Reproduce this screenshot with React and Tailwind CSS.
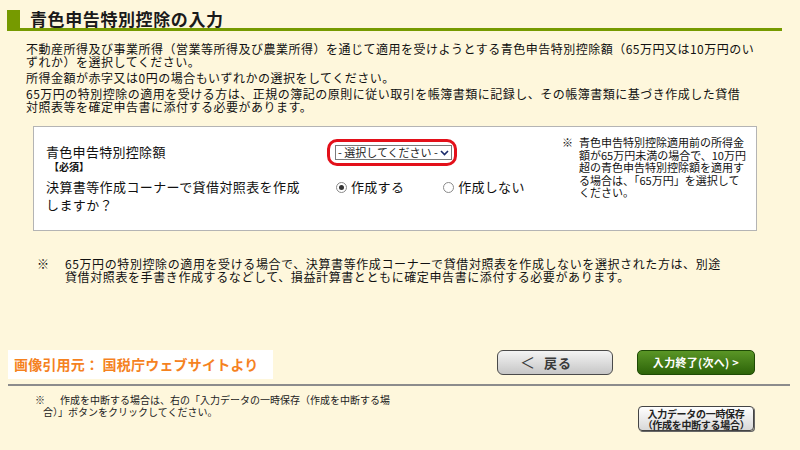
const font = {
  fontFamily: '"Noto Sans CJK JP", "Liberation Sans", sans-serif',
};

const Radio = ({ checked, label }) => (
  <div className="flex items-center">
    <span className="w-[11px] h-[11px] rounded-full border border-[#8a8a8a] bg-white flex items-center justify-center">
      {checked && <span className="w-[5px] h-[5px] rounded-full bg-[#333]"></span>}
    </span>
    <span className="ml-[4px] text-[13px] tracking-[0.3px]">{label}</span>
  </div>
);

const App = () => {
  return (
    <div
      className="w-[800px] h-[450px] bg-[#fef7dc] text-[#111] overflow-hidden flex flex-col"
      style={font}
    >
      {/* heading */}
      <div className="ml-[7px] w-[775px] mt-[10px] flex items-end border-b-[3px] border-[#769a00]">
        <div className="w-[13px] h-[18px] bg-[#769a00]"></div>
        <div className="ml-[10px] h-[18px] flex items-center text-[17px] font-bold tracking-[0.6px] text-[#1a1a1a]">
          青色申告特別控除の入力
        </div>
      </div>

      {/* intro */}
      <div className="ml-[26px] mt-[11px] text-[12px] leading-[13px] tracking-[0.5px] whitespace-nowrap">
        <p>
          不動産所得及び事業所得（営業等所得及び農業所得）を通じて適用を受けようとする青色申告特別控除額（65万円又は10万円のい
          <br />
          ずれか）を選択してください。
        </p>
        <p className="mt-[3px]">所得金額が赤字又は0円の場合もいずれかの選択をしてください。</p>
        <p className="mt-[3px]">
          65万円の特別控除の適用を受ける方は、正規の簿記の原則に従い取引を帳簿書類に記録し、その帳簿書類に基づき作成した貸借
          <br />
          対照表等を確定申告書に添付する必要があります。
        </p>
      </div>

      {/* form box */}
      <div className="ml-[33px] mt-[13px] w-[724px] h-[105px] bg-white border border-[#b4b4b4] flex">
        <div className="w-[528px] pl-[12px] pt-[12px]">
          <div className="flex items-start">
            <div className="w-[281px]">
              <div className="mt-[4px] text-[13px] leading-[18px] tracking-[0.3px]">青色申告特別控除額</div>
              <div className="ml-[3px] text-[10px] leading-[12px] font-bold">【必須】</div>
            </div>
            <div className="border-[3px] border-[#e3101a] rounded-[10px] pl-[5px] pr-[2px] py-[3px]">
              <div className="w-[117px] h-[15px] border border-[#7a7a7a] bg-white flex items-center justify-between px-[2px]">
                <span className="text-[11px] leading-[13px] text-[#222]">- 選択してください -</span>
                <svg width="9" height="6" viewBox="0 0 9 6">
                  <path d="M1 1 L4.5 4.5 L8 1" fill="none" stroke="#1a2a6a" strokeWidth="1.6" />
                </svg>
              </div>
            </div>
          </div>
          <div className="flex items-start mt-[5px]">
            <div className="w-[290px] text-[13px] leading-[18px] tracking-[0.4px]">
              決算書等作成コーナーで貸借対照表を作成
              <br />
              しますか？
            </div>
            <div className="flex h-[18px] items-center">
              <Radio checked label="作成する" />
              <div className="ml-[39px]">
                <Radio label="作成しない" />
              </div>
            </div>
          </div>
        </div>
        <div className="pt-[9px] flex text-[11px] leading-[12.5px] whitespace-nowrap">
          <span className="w-[17px]">※</span>
          <span>
            青色申告特別控除適用前の所得金
            <br />
            額が65万円未満の場合で、10万円
            <br />
            超の青色申告特別控除額を適用す
            <br />
            る場合は、「65万円」を選択して
            <br />
            ください。
          </span>
        </div>
      </div>

      {/* note */}
      <div className="ml-[37px] mt-[26px] flex text-[12px] leading-[13px] tracking-[0.6px] whitespace-nowrap">
        <span className="w-[28px]">※</span>
        <span>
          65万円の特別控除の適用を受ける場合で、決算書等作成コーナーで貸借対照表を作成しないを選択された方は、別途
          <br />
          貸借対照表を手書き作成するなどして、損益計算書とともに確定申告書に添付する必要があります。
        </span>
      </div>

      {/* footer buttons */}
      <div className="mt-[67px] flex items-start">
        <div className="ml-[8px] w-[265px] h-[29px] bg-white flex items-center pl-[6px] text-[14px] font-bold text-[#f5821f] tracking-[0.2px]">
          画像引用元： 国税庁ウェブサイトより
        </div>
        <button className="ml-[224px] w-[116px] h-[25px] rounded-[6px] border-[1.5px] border-[#4a4a4a] bg-gradient-to-b from-[#f4f4f4] to-[#c6c6c6] flex items-center text-[13px] font-bold text-[#3a3a3a]">
          <span className="ml-[22px] text-[15px] font-normal">＜</span>
          <span className="ml-[9px] tracking-[1px]">戻る</span>
        </button>
        <button className="ml-[24px] w-[118px] h-[25px] rounded-[5px] border border-[#1e4a05] bg-gradient-to-b from-[#5a9626] to-[#2d6408] flex items-center justify-center text-[11px] font-bold text-white tracking-[0.3px]">
          入力終了(次へ) &gt;
        </button>
      </div>
      <div className="ml-[8px] mt-[5px] w-[782px] h-[2px] bg-[#8c8c8c]"></div>

      {/* bottom */}
      <div className="flex items-start">
        <div className="ml-[35px] mt-[8px] w-[380px] text-[10px] leading-[12px] whitespace-nowrap text-[#222]">
          <div>
            ※<span className="ml-[15px]">作成を中断する場合は、右の「入力データの一時保存（作成を中断する場</span>
          </div>
          <div className="pl-[8px]">合）」ボタンをクリックしてください。</div>
        </div>
        <button className="ml-[223px] mt-[20px] w-[116px] h-[25px] rounded-[4px] border border-[#444] bg-gradient-to-b from-[#ffffff] to-[#d8d8d8] shadow-[1px_1px_0_#666] flex flex-col items-center justify-center text-[10px] leading-[11px] tracking-[-0.3px] font-bold text-[#222]">
          <span>入力データの一時保存</span>
          <span>（作成を中断する場合）</span>
        </button>
      </div>
    </div>
  );
};

export default App;
